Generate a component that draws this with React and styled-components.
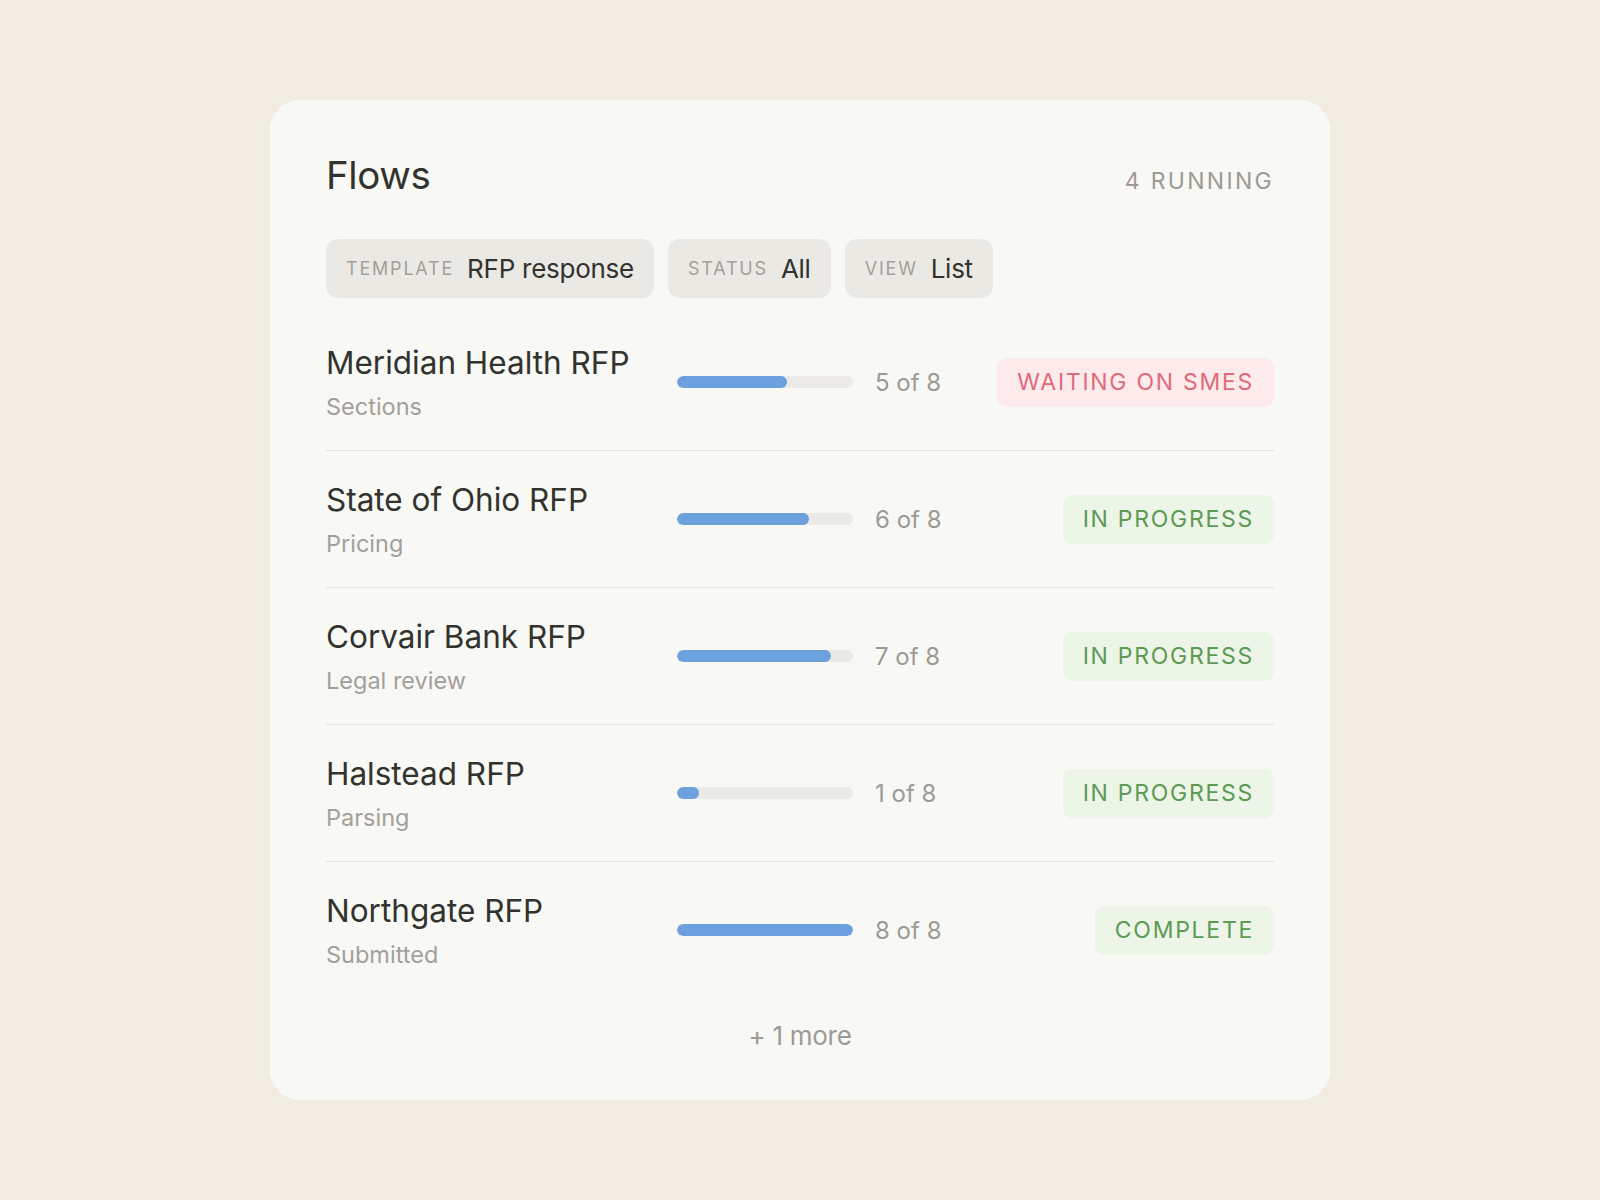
import React from "react";
import styled, { createGlobalStyle } from "styled-components";

const Global = createGlobalStyle`
  html, body { margin: 0; padding: 0; }
  body {
    background: #f1ece1;
    font-family: Inter, "Noto Sans", "Liberation Sans", sans-serif;
    -webkit-font-smoothing: antialiased;
  }
`;

const Page = styled.div`
  min-height: 1200px;
  display: flex;
  align-items: center;
  justify-content: center;
`;

const Card = styled.section`
  width: 1060px;
  height: 1000px;
  box-sizing: border-box;
  background: #f8f8f4;
  border-radius: 30px;
  padding: 52px 56px 56px;
  display: flex;
  flex-direction: column;
`;

const Header = styled.header`
  display: flex;
  align-items: baseline;
  justify-content: space-between;
`;

const Title = styled.h1`
  margin: 0;
  font-size: 38.5px;
  line-height: 46px;
  font-weight: 400;
  color: #32322e;
  letter-spacing: -0.01em;
`;

const Running = styled.span`
  font-size: 23px;
  letter-spacing: 0.1em;
  color: #9d9a93;
  text-transform: uppercase;
`;

const Filters = styled.div`
  display: flex;
  gap: 14px;
  margin-top: 41px;
`;

const Chip = styled.div`
  height: 59px;
  box-sizing: border-box;
  padding: 0 20px;
  display: flex;
  align-items: center;
  gap: 13px;
  background: #ebe9e4;
  border-radius: 12px;
`;

const ChipLabel = styled.span`
  font-size: 18px;
  letter-spacing: 0.1em;
  color: #a3a09a;
  text-transform: uppercase;
`;

const ChipValue = styled.span`
  font-size: 26px;
  color: #32322e;
  letter-spacing: -0.01em;
`;

const List = styled.div`
  margin-top: 16px;
  display: flex;
  flex-direction: column;
`;

const Row = styled.div`
  height: 137px;
  box-sizing: border-box;
  display: flex;
  align-items: center;
  border-bottom: 1px solid ${(p) => (p.$last ? "transparent" : "#e4e2dc")};
`;

const NameCol = styled.div`
  width: 351px;
  display: flex;
  flex-direction: column;
  gap: 10px;
  padding-top: 2px;
`;

const Name = styled.div`
  font-size: 31.5px;
  line-height: 38px;
  color: #32322e;
`;

const Sub = styled.div`
  font-size: 23.5px;
  line-height: 30px;
  color: #a3a09a;
`;

const Track = styled.div`
  width: 176px;
  height: 12px;
  border-radius: 6px;
  background: #ebeae6;
  overflow: hidden;
`;

const Fill = styled.div`
  height: 100%;
  border-radius: 6px;
  background: #6ca0de;
`;

const Count = styled.span`
  margin-left: 22px;
  font-size: 24px;
  color: #9d9a93;
`;

const Badge = styled.span`
  margin-left: auto;
  height: 49px;
  box-sizing: border-box;
  padding: 0 20px;
  display: inline-flex;
  align-items: center;
  border-radius: 9px;
  font-size: 23px;
  letter-spacing: 0.075em;
  text-transform: uppercase;
  background: ${(p) => (p.$tone === "warn" ? "#fdeaea" : "#ecf5e7")};
  color: ${(p) => (p.$tone === "warn" ? "#e06a7b" : "#5d9a54")};
`;

const More = styled.div`
  margin-top: 21px;
  text-align: center;
  font-size: 26px;
  color: #9d9a93;
  letter-spacing: -0.01em;
`;

const flows = [
  { name: "Meridian Health RFP", sub: "Sections", done: 5, status: "Waiting on SMEs", tone: "warn" },
  { name: "State of Ohio RFP", sub: "Pricing", done: 6, status: "In progress", tone: "ok" },
  { name: "Corvair Bank RFP", sub: "Legal review", done: 7, status: "In progress", tone: "ok" },
  { name: "Halstead RFP", sub: "Parsing", done: 1, status: "In progress", tone: "ok" },
  { name: "Northgate RFP", sub: "Submitted", done: 8, status: "Complete", tone: "ok" },
];

export default function App() {
  return (
    <>
      <Global />
      <Page>
        <Card>
          <Header>
            <Title>Flows</Title>
            <Running>4 running</Running>
          </Header>
          <Filters>
            <Chip>
              <ChipLabel>Template</ChipLabel>
              <ChipValue>RFP response</ChipValue>
            </Chip>
            <Chip>
              <ChipLabel>Status</ChipLabel>
              <ChipValue>All</ChipValue>
            </Chip>
            <Chip>
              <ChipLabel>View</ChipLabel>
              <ChipValue>List</ChipValue>
            </Chip>
          </Filters>
          <List>
            {flows.map((f, i) => (
              <Row key={f.name} $last={i === flows.length - 1}>
                <NameCol>
                  <Name>{f.name}</Name>
                  <Sub>{f.sub}</Sub>
                </NameCol>
                <Track>
                  <Fill style={{ width: `${(f.done / 8) * 100}%` }} />
                </Track>
                <Count>{f.done} of 8</Count>
                <Badge $tone={f.tone}>{f.status}</Badge>
              </Row>
            ))}
          </List>
          <More>+ 1 more</More>
        </Card>
      </Page>
    </>
  );
}
